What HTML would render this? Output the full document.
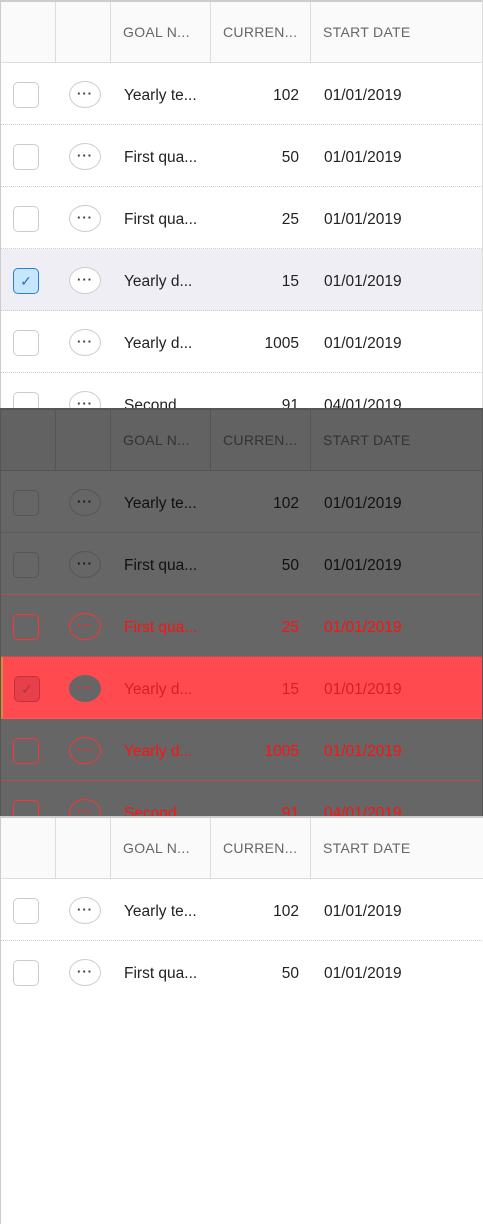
<!DOCTYPE html>
<html><head><meta charset="utf-8"><style>
*{box-sizing:border-box;margin:0;padding:0}
body{width:483px;height:1224px;background:#fff;font-family:"Liberation Sans",sans-serif;position:relative;overflow:hidden}
.p{position:absolute;left:0;width:483px;height:408px;overflow:hidden;border-left:1px solid #ccc;border-right:1px solid #ddd}
.hd{position:absolute;left:0;top:0;width:483px;height:63px;background:#fafafa;border-top:2px solid #ccc;border-bottom:1px solid #ddd}
.hc{position:absolute;top:0;height:61px;border-right:1px solid #ddd;font-size:14px;color:#666;line-height:61px;padding-left:12px;letter-spacing:.3px}
.r{position:absolute;left:0;width:483px;height:62px;border-bottom:1px dotted #ccc}
.cb{position:absolute;left:12px;top:19px;width:26px;height:26px;border:1px solid #ccc;border-radius:5px;background:#fff}
.el{position:absolute;left:68px;top:18px;width:32px;height:27px;border:1px solid #ccc;border-radius:50%;background:#fff;text-align:center;font-size:13px;line-height:23px;font-weight:bold;color:#333;letter-spacing:1px}
.t{position:absolute;top:24px;font-size:15.5px;color:#222}
.n{left:123px}.c{left:200px;width:98px;text-align:right}.d{left:323px}
</style></head><body>

<div class="p" style="top:0">
<div class="hd"><div class="hc" style="left:0;width:55px"></div><div class="hc" style="left:55px;width:55px"></div><div class="hc" style="left:110px;width:100px">GOAL N...</div><div class="hc" style="left:210px;width:100px">CURREN...</div><div class="hc" style="left:310px;width:173px;border:0">START DATE</div></div>
<div class="r" style="top:63px"><div class="cb"></div><div class="el">···</div><div class="t n">Yearly te...</div><div class="t c">102</div><div class="t d">01/01/2019</div></div>
<div class="r" style="top:125px"><div class="cb"></div><div class="el">···</div><div class="t n">First qua...</div><div class="t c">50</div><div class="t d">01/01/2019</div></div>
<div class="r" style="top:187px"><div class="cb"></div><div class="el">···</div><div class="t n">First qua...</div><div class="t c">25</div><div class="t d">01/01/2019</div></div>
<div class="r" style="top:249px;background:#f0eef5"><div class="cb" style="background:#c5e6fb;border-color:#2f7fd0;text-align:center;color:#2f6fc0;font-size:14px;line-height:24px">✓</div><div class="el">···</div><div class="t n">Yearly d...</div><div class="t c">15</div><div class="t d">01/01/2019</div></div>
<div class="r" style="top:311px"><div class="cb"></div><div class="el">···</div><div class="t n">Yearly d...</div><div class="t c">1005</div><div class="t d">01/01/2019</div></div>
<div class="r" style="top:373px"><div class="cb"></div><div class="el">···</div><div class="t n">Second...</div><div class="t c">91</div><div class="t d">04/01/2019</div></div>
</div>

<div class="p" style="top:408px;background:#666;border-color:#555">
<div class="hd" style="background:#626262;border-top-color:#555;border-bottom-color:#555"><div class="hc" style="left:0;width:55px;border-color:#555"></div><div class="hc" style="left:55px;width:55px;border-color:#555"></div><div class="hc" style="left:110px;width:100px;border-color:#555;color:#333">GOAL N...</div><div class="hc" style="left:210px;width:100px;border-color:#555;color:#333">CURREN...</div><div class="hc" style="left:310px;width:173px;border:0;color:#333">START DATE</div></div>
<div class="r" style="top:63px;border-color:#555"><div class="cb" style="background:#666;border-color:#555"></div><div class="el" style="background:#666;border-color:#555;color:#111">···</div><div class="t n" style="color:#111">Yearly te...</div><div class="t c" style="color:#111">102</div><div class="t d" style="color:#111">01/01/2019</div></div>
<div class="r" style="top:125px;border-bottom:1px dotted #f33"><div class="cb" style="background:#666;border-color:#555"></div><div class="el" style="background:#666;border-color:#555;color:#111">···</div><div class="t n" style="color:#111">First qua...</div><div class="t c" style="color:#111">50</div><div class="t d" style="color:#111">01/01/2019</div></div>
<div class="r" style="top:187px;border-bottom:1px dotted #f44"><div class="cb" style="background:#666;border-color:#f33"></div><div class="el" style="background:#666;border-color:#f33;color:#f22">···</div><div class="t n" style="color:#f11">First qua...</div><div class="t c" style="color:#f11">25</div><div class="t d" style="color:#f11">01/01/2019</div></div>
<div class="r" style="top:249px;background:#ff4a4f;border-left:2px solid #d98a3a;border-bottom:1px dotted #f66"><div class="cb" style="left:11px;background:#e8404a;border-color:#c03040;text-align:center;color:#b03040;font-size:14px;line-height:24px">✓</div><div class="el" style="left:66px;background:#666;border-color:#666;color:#f22">···</div><div class="t n" style="left:121px;color:#d81e2a">Yearly d...</div><div class="t c" style="left:198px;color:#d81e2a">15</div><div class="t d" style="left:321px;color:#d81e2a">01/01/2019</div></div>
<div class="r" style="top:311px;border-bottom:1px dotted #f33"><div class="cb" style="background:#666;border-color:#f33"></div><div class="el" style="background:#666;border-color:#f33;color:#f22">···</div><div class="t n" style="color:#f11">Yearly d...</div><div class="t c" style="color:#f11">1005</div><div class="t d" style="color:#f11">01/01/2019</div></div>
<div class="r" style="top:373px;border:0"><div class="cb" style="background:#666;border-color:#f33"></div><div class="el" style="background:#666;border-color:#f33;color:#f22">···</div><div class="t n" style="color:#f11">Second...</div><div class="t c" style="color:#f11">91</div><div class="t d" style="color:#f11">04/01/2019</div></div>
</div>

<div class="p" style="top:816px;border-right:0">
<div class="hd"><div class="hc" style="left:0;width:55px"></div><div class="hc" style="left:55px;width:55px"></div><div class="hc" style="left:110px;width:100px">GOAL N...</div><div class="hc" style="left:210px;width:100px">CURREN...</div><div class="hc" style="left:310px;width:173px;border:0">START DATE</div></div>
<div class="r" style="top:63px"><div class="cb"></div><div class="el">···</div><div class="t n">Yearly te...</div><div class="t c">102</div><div class="t d">01/01/2019</div></div>
<div class="r" style="top:125px;border:0"><div class="cb"></div><div class="el">···</div><div class="t n">First qua...</div><div class="t c">50</div><div class="t d">01/01/2019</div></div>
</div>
</body></html>
